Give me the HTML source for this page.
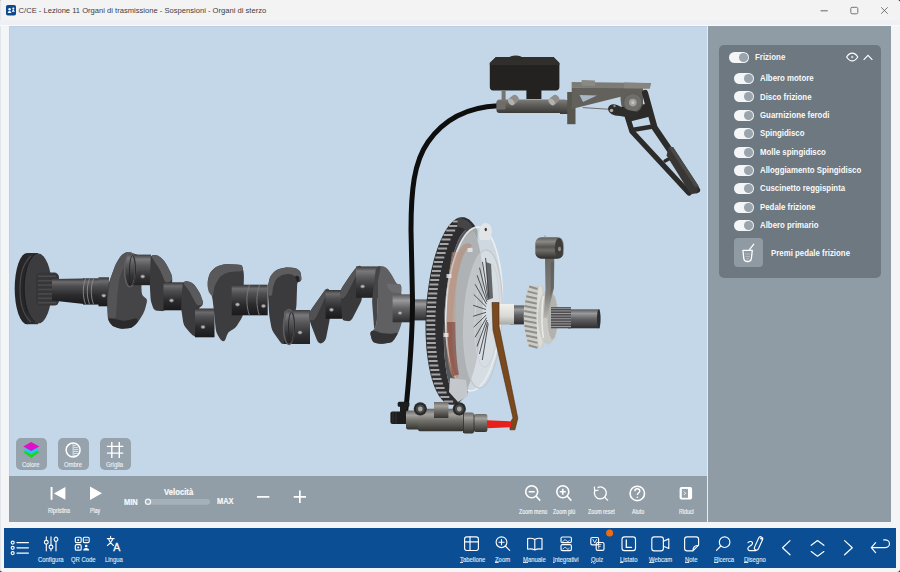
<!DOCTYPE html><html><head><meta charset="utf-8"><style>
*{box-sizing:border-box;margin:0;padding:0}
html,body{width:900px;height:572px;overflow:hidden;background:#202020;font-family:"Liberation Sans",sans-serif}
#win{position:absolute;left:0;top:0;width:900px;height:572px;background:#f4f5f7;border-radius:1.5px 3px 3px 3px;overflow:hidden}
.bx{position:absolute}
.tx{position:absolute;white-space:nowrap}
svg{position:absolute;left:0;top:0;overflow:visible}
u{text-decoration:underline;text-underline-offset:0.3px;text-decoration-thickness:0.6px}
</style></head><body><div id="win"><div class="bx" style="left:0px;top:0px;width:900px;height:20px;background:#f3f3f3;"></div>
<div class="bx" style="left:9px;top:26px;width:698px;height:450px;background:#c3d7e8;"></div>
<div class="bx" style="left:9px;top:26px;width:698px;height:1px;background:#b9cfe1;"></div>
<div class="bx" style="left:9px;top:26px;width:1px;height:450px;background:#bcd1e3;"></div>
<div class="bx" style="left:0px;top:0px;width:1px;height:572px;background:#e3e6ea;"></div>
<div class="bx" style="left:0px;top:20px;width:900px;height:5px;background:#eff0f3;"></div>
<div class="bx" style="left:0px;top:25px;width:900px;height:1px;background:#f8fafc;"></div>
<div class="bx" style="left:707px;top:26px;width:1px;height:496px;background:#e3edf3;"></div>
<div class="bx" style="left:9px;top:476px;width:698px;height:46px;background:#929ea7;"></div>
<div class="bx" style="left:708px;top:26px;width:183px;height:496px;background:#909ca5;"></div>
<div class="bx" style="left:719px;top:45px;width:162px;height:233px;background:#6d7880;border-radius:5px"></div>
<div class="bx" style="left:4px;top:528px;width:892px;height:40px;background:#0b4e93;"></div>
<svg width="900" height="20"><rect x="6" y="5" width="10" height="10.5" rx="1.8" fill="#0b4a92"/><circle cx="9.6" cy="9.2" r="1.2" fill="#fff"/><circle cx="13.3" cy="8.6" r="1.05" fill="#fff"/><path d="M7.7 12.9c0.2-1.3 0.9-2 1.9-2s1.7 0.7 1.9 2z M11.9 11.7c0.2-1 0.7-1.6 1.4-1.6s1.2 0.6 1.4 1.6z" fill="#fff"/><line x1="820.6" y1="10.8" x2="827.8" y2="10.8" stroke="#666" stroke-width="1"/><rect x="850.8" y="7.3" width="7" height="6.5" rx="1.3" fill="none" stroke="#666" stroke-width="0.9"/><path d="M881.2 7.3L887.7 13.7M887.7 7.3L881.2 13.7" stroke="#666" stroke-width="0.9"/></svg>
<div class="tx" style="left:18.60px;top:6.81px;font-size:7.6px;line-height:7.6px;font-weight:400;color:#404040;">C/CE - Lezione 11 Organi di trasmissione - Sospensioni - Organi di sterzo</div>
<svg width="900" height="572"><defs>
<clipPath id="vc"><rect x="9" y="26" width="698" height="450"/></clipPath>
<linearGradient id="gc" x1="0" y1="0" x2="0" y2="1"><stop offset="0" stop-color="#353436"/><stop offset="0.13" stop-color="#6c6b6e"/><stop offset="0.3" stop-color="#4e4d50"/><stop offset="0.65" stop-color="#2b2a2c"/><stop offset="1" stop-color="#1a191b"/></linearGradient>
<linearGradient id="gc2" x1="0" y1="0" x2="0" y2="1"><stop offset="0" stop-color="#3d3c3e"/><stop offset="0.15" stop-color="#7a797c"/><stop offset="0.35" stop-color="#5a595c"/><stop offset="0.7" stop-color="#333235"/><stop offset="1" stop-color="#222123"/></linearGradient>
<linearGradient id="gsh" x1="0" y1="0" x2="0" y2="1"><stop offset="0" stop-color="#3a393b"/><stop offset="0.25" stop-color="#646366"/><stop offset="0.5" stop-color="#3e3d40"/><stop offset="1" stop-color="#1e1d1f"/></linearGradient>
<linearGradient id="gsl" x1="0" y1="0" x2="0" y2="1"><stop offset="0" stop-color="#6a6965"/><stop offset="0.25" stop-color="#a2a19d"/><stop offset="0.5" stop-color="#75746f"/><stop offset="1" stop-color="#34332f"/></linearGradient>
<linearGradient id="gmc" x1="0" y1="0" x2="0" y2="1"><stop offset="0" stop-color="#7d7c78"/><stop offset="0.4" stop-color="#5f5e5a"/><stop offset="1" stop-color="#3a3936"/></linearGradient>
<linearGradient id="gsh2" x1="0" y1="0" x2="0" y2="1"><stop offset="0" stop-color="#5a5a5c"/><stop offset="0.22" stop-color="#9a9a9c"/><stop offset="0.5" stop-color="#636365"/><stop offset="1" stop-color="#2e2e30"/></linearGradient>
<linearGradient id="gsl2" x1="0" y1="0" x2="0" y2="1"><stop offset="0" stop-color="#f0f0ee"/><stop offset="0.6" stop-color="#d8d8d4"/><stop offset="1" stop-color="#a9a9a5"/></linearGradient>
<linearGradient id="glev" x1="0" y1="0" x2="0" y2="1"><stop offset="0" stop-color="#5e5d5a"/><stop offset="0.2" stop-color="#8a8985"/><stop offset="0.45" stop-color="#55544f"/><stop offset="0.6" stop-color="#6e6d69"/><stop offset="1" stop-color="#2e2d2b"/></linearGradient>
<linearGradient id="garm" x1="0" y1="0" x2="0" y2="1"><stop offset="0" stop-color="#6a6965"/><stop offset="0.6" stop-color="#7e7d79"/><stop offset="1" stop-color="#b5b4b0"/></linearGradient>
</defs><g clip-path="url(#vc)"><ellipse cx="27" cy="288.6" rx="12.3" ry="35.6" fill="#262527"/>
<rect x="27" y="253" width="11" height="71.2" fill="#2c2b2d"/>
<ellipse cx="38.2" cy="288.6" rx="13.6" ry="35" fill="#3c3b3d"/>
<path d="M31 256c-7 6-11 18-11 33s4 27 11 33" fill="none" stroke="#4a494b" stroke-width="1.2"/>
<path d="M35 254c-7 6-11 18-11 34s4 28 11 34" fill="none" stroke="#1e1d1f" stroke-width="1"/>
<rect x="36" y="272.6" width="23" height="33" rx="5" fill="#363537"/>
<rect x="38" y="275.5" width="18" height="1.6" fill="#4b4a4c"/>
<rect x="38" y="279.9" width="18" height="1.6" fill="#4b4a4c"/>
<rect x="38" y="284.3" width="18" height="1.6" fill="#4b4a4c"/>
<rect x="38" y="288.7" width="18" height="1.6" fill="#4b4a4c"/>
<rect x="38" y="293.1" width="18" height="1.6" fill="#4b4a4c"/>
<rect x="38" y="297.5" width="18" height="1.6" fill="#4b4a4c"/>
<rect x="38" y="301.9" width="18" height="1.6" fill="#4b4a4c"/>
<path d="M52 279L84 278.6L84 304L52 300.5Z" fill="url(#gc)"/>
<rect x="83" y="278.3" width="16" height="26.3" fill="url(#gc)"/>
<path d="M85.5 278.8c-1.5 4-2.2 8-2.2 12.5s0.7 9 2.2 13" fill="none" stroke="#8d8c8e" stroke-width="0.9"/>
<path d="M89.5 278.8c-1.5 4-2.2 8-2.2 12.5s0.7 9 2.2 13" fill="none" stroke="#8d8c8e" stroke-width="0.9"/>
<path d="M93.5 278.8c-1.5 4-2.2 8-2.2 12.5s0.7 9 2.2 13" fill="none" stroke="#8d8c8e" stroke-width="0.9"/>
<rect x="98.5" y="277.3" width="10.5" height="29" fill="url(#gc)"/>
<ellipse cx="103.8" cy="295.6" rx="2.1" ry="1.7" fill="#b3b3b3" stroke="#5a5a5a" stroke-width="0.6"/>
<path d="M129.2 252.4L129.2 252.4Q132.3 252.9 135.3 254.0L138.0 254.9Q141.0 256.0 141.5 259.2L142.5 266.8Q143.0 270.0 142.7 273.2L141.6 282.8Q141.3 286.0 141.5 289.2L141.7 292.5Q141.9 295.7 144.1 297.0L144.1 297.0Q146.3 298.3 146.8 299.6L146.8 299.6Q147.2 300.9 146.4 304.0L145.3 308.3Q144.5 311.4 142.9 314.2L140.0 319.1Q138.4 321.9 136.0 324.0L133.8 325.9Q131.4 328.0 128.2 328.2L124.2 328.6Q121.0 328.8 117.9 327.9L115.3 327.1Q112.2 326.2 110.4 323.6L109.7 322.7Q107.9 320.1 107.7 316.9L107.2 305.8Q107.0 302.6 107.2 299.4L107.7 288.4Q107.9 285.2 109.0 282.2L109.4 281.2Q110.5 278.2 111.6 275.2L114.6 267.2Q115.7 264.2 117.4 261.5L119.3 258.2Q121.0 255.5 123.6 253.8L123.6 253.8Q126.2 252.0 129.2 252.4Z" fill="#454446" />
<path d="M109.1 320.8L110.6 323.4Q112.2 326.2 115.3 327.1L117.9 327.9Q121.0 328.8 124.2 328.6L128.2 328.2Q131.4 328.0 133.8 325.9L136.0 324.0Q138.4 321.9 137.7 319.9L137.7 319.9Q137.0 318.0 133.9 318.8L128.1 320.2Q125.0 321.0 121.9 320.4L117.1 319.6Q114.0 319.0 110.8 318.5L110.7 318.5Q107.5 318.0 109.1 320.8Z" fill="#2a292b" />
<path d="M111.4 275.9L114.8 266.5Q115.7 264.2 117.0 262.1L119.7 257.6Q121.0 255.5 123.1 254.1L124.1 253.4Q126.2 252.0 128.7 252.4L129.8 252.5Q132.3 252.9 134.2 253.9L134.2 253.9Q136.0 255.0 133.8 256.1L132.2 256.9Q130.0 258.0 128.5 260.0L125.5 264.0Q124.0 266.0 123.2 268.4L119.8 277.6Q119.0 280.0 118.8 282.5L117.2 297.5Q117.0 300.0 116.9 302.5L116.1 315.5Q116.0 318.0 113.5 318.0L110.5 318.0Q108.0 318.0 107.9 315.5L107.6 302.5Q107.5 300.0 107.8 297.5L110.2 280.7Q110.5 278.2 111.4 275.9Z" fill="#545356" />
<rect x="130" y="254.6" width="21" height="30.6" fill="url(#gc2)"/>
<ellipse cx="130" cy="269.8" rx="5.5" ry="17" fill="url(#gc2)" stroke="#5e5d60" stroke-width="1.6"/><ellipse cx="132.5" cy="270" rx="3" ry="14.5" fill="none" stroke="#2a292b" stroke-width="1"/>
<ellipse cx="142.7" cy="276.5" rx="2.1" ry="1.7" fill="#b3b3b3" stroke="#5a5a5a" stroke-width="0.6"/>
<path d="M153.3 255.1L153.3 255.0Q155.9 254.6 158.5 255.9L158.5 255.9Q161.1 257.2 163.0 259.8L164.5 261.6Q166.4 264.2 167.8 267.1L170.2 271.8Q171.6 274.7 172.1 277.4L172.1 277.4Q172.5 280.0 172.0 283.2L168.5 302.8Q168.0 306.0 166.3 308.7L166.3 308.7Q164.6 311.4 161.4 311.1L157.3 310.8Q154.1 310.5 153.0 307.5L151.8 303.9Q150.7 300.9 150.5 297.7L150.0 288.4Q149.8 285.2 149.9 282.0L150.6 258.7Q150.7 255.5 153.3 255.1Z" fill="#3a393b" />
<path d="M153.3 255.1L153.3 255.0Q155.9 254.6 158.5 255.9L158.5 255.9Q161.1 257.2 163.0 259.8L164.5 261.6Q166.4 264.2 167.8 267.1L170.2 271.8Q171.6 274.7 172.1 277.4L172.1 277.4Q172.5 280.0 169.8 281.7L168.7 282.3Q166.0 284.0 164.7 281.1L161.3 272.9Q160.0 270.0 158.3 267.3L152.4 258.2Q150.7 255.5 153.3 255.1Z" fill="#5b5a5d" />
<rect x="163.5" y="282.3" width="20.5" height="28" fill="url(#gc)"/>
<ellipse cx="171.5" cy="300.5" rx="2.1" ry="1.7" fill="#b3b3b3" stroke="#5a5a5a" stroke-width="0.6"/>
<path d="M184.8 281.5L184.8 281.5Q187.0 280.6 189.9 282.0L191.1 282.6Q194.0 284.0 195.7 286.7L198.5 291.0Q200.2 293.7 201.2 296.7L202.7 301.2Q203.7 304.2 201.3 306.3L200.0 307.3Q197.6 309.4 197.6 312.6L197.6 334.1Q197.6 337.3 194.9 336.5L194.9 336.5Q192.3 335.6 190.3 333.1L185.6 327.5Q183.6 325.0 183.1 321.8L181.5 310.8Q181.0 307.6 181.2 304.4L182.5 285.5Q182.7 282.3 184.8 281.5Z" fill="#3b3a3c" />
<path d="M184.8 281.5L184.8 281.5Q187.0 280.6 189.9 282.0L191.1 282.6Q194.0 284.0 195.7 286.7L198.5 291.0Q200.2 293.7 201.2 296.7L202.7 301.2Q203.7 304.2 200.6 305.0L200.1 305.2Q197.0 306.0 195.6 303.1L191.4 294.9Q190.0 292.0 188.1 289.4L184.6 284.9Q182.7 282.3 184.8 281.5Z" fill="#5a595c" />
<rect x="195" y="308.5" width="19.5" height="28.8" fill="url(#gc)"/>
<ellipse cx="203.0" cy="327.0" rx="2.1" ry="1.7" fill="#b3b3b3" stroke="#5a5a5a" stroke-width="0.6"/>
<path d="M212.1 270.4L213.6 268.9Q215.9 266.6 219.0 265.7L221.5 264.9Q224.6 264.0 227.8 264.2L236.8 264.6Q240.0 264.8 241.1 265.1L241.1 265.1Q242.2 265.5 242.8 268.6L243.4 271.1Q244.0 274.2 243.9 277.4L243.1 312.8Q243.0 316.0 241.3 318.7L236.9 325.7Q235.2 328.4 232.3 329.8L231.0 330.6Q228.1 332.0 227.0 335.0L225.7 338.7Q224.6 341.7 222.8 341.2L222.8 341.2Q221.1 340.8 219.5 338.0L217.6 334.8Q216.0 332.0 215.7 328.8L214.4 316.1Q214.1 312.9 213.8 309.7L212.7 300.4Q212.4 297.2 211.3 294.2L208.3 285.3Q207.2 282.3 208.0 279.2L209.0 275.8Q209.8 272.7 212.1 270.4Z" fill="#3d3c3e" />
<path d="M207.8 281.6L209.2 275.1Q209.8 272.7 211.6 270.9L214.1 268.4Q215.9 266.6 218.3 265.9L222.2 264.7Q224.6 264.0 227.1 264.1L237.5 264.7Q240.0 264.8 241.1 265.1L241.1 265.1Q242.2 265.5 242.8 267.9L242.9 268.6Q243.5 271.0 241.0 271.2L240.5 271.3Q238.0 271.5 235.5 271.6L230.5 271.9Q228.0 272.0 225.8 273.2L222.2 275.3Q220.0 276.5 218.7 278.7L215.8 283.8Q214.5 286.0 214.1 288.5L213.2 294.5Q212.8 297.0 211.2 295.1L210.1 293.9Q208.5 292.0 208.1 289.5L207.6 286.5Q207.2 284.0 207.8 281.6Z" fill="#59585b" />
<rect x="231.7" y="284.7" width="36" height="30.6" fill="url(#gc)"/>
<path d="M249.5 285c-1.8 5-2.6 10-2.6 15.3s0.8 10.3 2.6 15.3" fill="none" stroke="#77767a" stroke-width="1"/>
<path d="M259.5 285c-1.8 5-2.6 10-2.6 15.3s0.8 10.3 2.6 15.3" fill="none" stroke="#77767a" stroke-width="1"/>
<ellipse cx="237.5" cy="304.5" rx="2.1" ry="1.7" fill="#b3b3b3" stroke="#5a5a5a" stroke-width="0.6"/>
<ellipse cx="263.5" cy="306.0" rx="2.1" ry="1.7" fill="#b3b3b3" stroke="#5a5a5a" stroke-width="0.6"/>
<path d="M272.4 273.7L274.1 272.1Q276.3 269.8 279.4 269.0L282.8 268.0Q285.9 267.2 289.1 267.5L293.2 267.8Q296.4 268.1 298.5 269.9L298.5 269.9Q300.7 271.6 301.0 274.8L301.3 278.0Q301.6 281.2 299.4 281.6L299.4 281.6Q297.2 282.0 297.1 285.2L296.5 304.2Q296.4 307.4 295.6 310.5L288.4 339.2Q287.6 342.3 285.0 343.6L285.0 343.6Q282.4 345.0 280.6 342.4L273.7 332.7Q271.9 330.1 271.3 327.0L269.9 319.2Q269.3 316.1 269.1 312.9L267.8 290.5Q267.6 287.3 268.3 284.2L269.5 279.1Q270.2 276.0 272.4 273.7Z" fill="#3b3a3c" />
<path d="M268.2 284.9L269.6 278.4Q270.2 276.0 272.0 274.2L274.5 271.6Q276.3 269.8 278.7 269.1L283.5 267.9Q285.9 267.2 288.4 267.4L293.9 267.9Q296.4 268.1 298.3 269.7L298.8 270.0Q300.7 271.6 300.9 274.1L301.4 278.7Q301.6 281.2 299.6 281.6L299.6 281.6Q297.5 282.0 296.8 279.6L296.7 278.9Q296.0 276.5 293.7 275.5L292.3 274.8Q290.0 273.8 287.5 274.1L284.5 274.5Q282.0 274.8 280.0 276.2L278.0 277.6Q276.0 279.0 275.1 281.3L273.9 284.7Q273.0 287.0 272.7 289.5L272.3 293.5Q272.0 296.0 270.0 296.0L270.0 296.0Q268.0 296.0 267.9 293.5L267.7 289.8Q267.6 287.3 268.2 284.9Z" fill="#5c5b5e" />
<path d="M295 277c1.3-1.6 3.2-1.6 4.2 0.4l0.4 4.2l-2.4 0.5z" fill="#242325"/>
<rect x="284" y="310" width="26" height="34" fill="url(#gc2)"/>
<ellipse cx="289" cy="327" rx="5.5" ry="17.5" fill="url(#gc2)" stroke="#5e5d60" stroke-width="1.6"/><ellipse cx="291.5" cy="327" rx="3" ry="15" fill="none" stroke="#2a292b" stroke-width="1"/>
<ellipse cx="300.0" cy="332.5" rx="2.1" ry="1.7" fill="#b3b3b3" stroke="#5a5a5a" stroke-width="0.6"/>
<path d="M310.9 310.0L324.5 290.8Q326.4 288.2 328.2 289.1L328.2 289.1Q330.0 290.0 330.0 293.2L330.0 314.8Q330.0 318.0 329.4 321.1L326.2 337.5Q325.6 340.6 323.4 342.3L323.4 342.3Q321.2 344.0 319.4 343.1L319.4 343.1Q317.7 342.3 316.6 339.3L310.9 324.4Q309.8 321.4 309.5 318.2L309.3 315.8Q309.0 312.6 310.9 310.0Z" fill="#39383a" />
<path d="M310.9 310.0L324.5 290.8Q326.4 288.2 328.2 289.1L328.2 289.1Q330.0 290.0 328.4 292.7L325.6 297.3Q324.0 300.0 322.7 302.9L316.3 317.1Q315.0 320.0 312.5 320.5L312.5 320.5Q310.0 321.0 309.6 317.8L309.4 315.8Q309.0 312.6 310.9 310.0Z" fill="#515053" />
<rect x="325.6" y="290" width="16.6" height="28.8" fill="url(#gc)"/>
<ellipse cx="331.5" cy="309.8" rx="2.1" ry="1.7" fill="#b3b3b3" stroke="#5a5a5a" stroke-width="0.6"/>
<path d="M342.2 287.3L349.1 276.9Q350.9 274.2 352.9 271.7L355.0 268.9Q357.0 266.4 359.2 265.9L359.2 265.9Q361.4 265.5 361.5 268.7L361.9 296.8Q362.0 300.0 360.5 302.8L352.4 318.6Q350.9 321.4 347.7 321.1L345.4 320.8Q342.2 320.5 342.0 317.3L340.6 293.2Q340.4 290.0 342.2 287.3Z" fill="#39383a" />
<path d="M342.2 287.3L349.1 276.9Q350.9 274.2 352.9 271.7L355.0 268.9Q357.0 266.4 359.2 265.9L359.2 265.9Q361.4 265.5 359.9 268.3L357.5 273.2Q356.0 276.0 354.6 278.9L347.4 293.1Q346.0 296.0 343.5 298.0L343.5 298.0Q341.0 300.0 340.8 296.8L340.6 293.2Q340.4 290.0 342.2 287.3Z" fill="#545356" />
<rect x="356" y="266.4" width="23.5" height="31.4" fill="url(#gc2)"/>
<ellipse cx="362.6" cy="286.4" rx="2.1" ry="1.7" fill="#b3b3b3" stroke="#5a5a5a" stroke-width="0.6"/>
<path d="M383.8 266.4L383.8 266.4Q386.4 267.2 388.2 269.8L390.8 273.4Q392.6 276.0 394.0 278.9L395.5 281.8Q396.9 284.7 399.1 284.2L399.1 284.2Q401.3 283.8 401.3 287.0L401.3 290.2Q401.3 293.4 401.4 296.6L402.1 318.2Q402.2 321.4 401.2 324.4L399.7 328.9Q398.7 331.9 397.1 334.7L394.2 339.5Q392.6 342.3 389.4 342.8L384.4 343.5Q381.2 344.0 378.1 343.4L375.6 342.9Q372.5 342.3 371.7 339.2L370.6 335.0Q369.8 331.9 372.0 331.0L372.0 331.0Q374.2 330.1 375.3 327.1L375.7 326.1Q376.8 323.1 376.9 319.9L377.6 301.9Q377.7 298.7 377.5 295.5L376.2 270.4Q376.0 267.2 378.6 266.4L378.6 266.4Q381.2 265.5 383.8 266.4Z" fill="#605f62" />
<path d="M372.0 331.0L372.0 331.0Q374.2 330.1 377.1 331.5L377.1 331.6Q380.0 333.0 383.2 333.3L389.4 333.7Q392.6 334.0 395.6 333.0L395.7 332.9Q398.7 331.9 397.1 334.7L394.2 339.5Q392.6 342.3 389.4 342.8L384.4 343.5Q381.2 344.0 378.1 343.4L375.6 342.9Q372.5 342.3 371.7 339.2L370.6 335.0Q369.8 331.9 372.0 331.0Z" fill="#343335" />
<path d="M378.6 266.4L378.6 266.4Q381.2 265.5 380.5 268.6L378.7 276.9Q378.0 280.0 377.9 283.2L377.8 295.5Q377.7 298.7 377.6 301.9L376.9 319.9Q376.8 323.1 375.7 326.1L375.3 327.1Q374.2 330.1 374.0 326.9L372.2 303.2Q372.0 300.0 372.4 296.8L375.6 270.4Q376.0 267.2 378.6 266.4Z" fill="#454446" />
<path d="M389.2 283.5L393.7 284.2Q396.9 284.7 399.1 284.2L399.1 284.2Q401.3 283.8 401.3 287.0L401.3 290.2Q401.3 293.4 398.1 293.0L393.2 292.4Q390.0 292.0 388.7 289.1L387.3 285.9Q386.0 283.0 389.2 283.5Z" fill="#6c6b6e" />
<rect x="392.6" y="294.3" width="21" height="28" fill="url(#gsh2)"/>
<rect x="412" y="299.4" width="18" height="21" fill="url(#gsh2)"/>
<ellipse cx="400.0" cy="313.0" rx="2.1" ry="1.7" fill="#b3b3b3" stroke="#5a5a5a" stroke-width="0.6"/>
<path d="M498 105.8C470 107 445 118 428 142C414 162 411 190 411 230L412.5 300C412.5 345 409 380 405 418" fill="none" stroke="#0e0e0e" stroke-width="5"/>
<path d="M467.4 393.2 L466.3 394.7 L465.3 396.2 L464.2 397.5 L463.1 398.7 L462.0 399.8 L460.9 400.8 L459.9 401.7 L458.8 402.5 L457.7 403.2 L456.6 403.7 L455.5 404.2 L454.4 404.5 L453.3 404.7 L452.2 404.8 L451.1 404.8 L450.0 404.7 L449.0 404.5 L447.9 404.1 L446.8 403.6 L445.8 403.1 L444.8 402.4 L443.8 401.6 L442.8 400.6 L441.8 399.6 L440.9 398.5 L439.9 397.3 L439.0 395.9 L438.1 394.5 L437.3 392.9 L436.4 391.3 L435.6 389.5 L434.8 387.7 L434.0 385.8 L433.3 383.7 L432.6 381.6 L431.9 379.4 L431.3 377.1 L430.6 374.8 L430.1 372.3 L429.5 369.8 L429.0 367.2 L428.5 364.6 L428.1 361.8 L427.6 359.1 L427.3 356.2 L426.9 353.3 L426.6 350.4 L426.3 347.4 L426.1 344.3 L425.9 341.3 L425.8 338.1 L425.6 335.0 L425.6 331.8 L425.5 328.6 L425.5 325.4 L425.5 322.1 L425.6 318.9 L425.7 315.6 L425.9 312.3 L426.1 309.1 L426.3 305.8 L426.5 302.5 L426.8 299.3 L427.2 296.0 L427.6 292.8 L428.0 289.6 L428.4 286.4 L428.9 283.3 L429.4 280.2 L429.9 277.1 L430.5 274.1 L431.1 271.1 L431.8 268.1 L432.5 265.2 L433.2 262.4 L433.9 259.6 L434.7 256.9 L435.4 254.3 L436.3 251.7 L437.1 249.2 L438.0 246.8 L438.8 244.4 L439.8 242.2 L440.7 240.0 L441.6 237.9 L442.6 235.9 L443.6 234.0 L444.6 232.1 L445.6 230.4 L446.6 228.8 L447.7 227.3 L448.7 225.8 L449.8 224.5 L450.9 223.3 L452.0 222.2 L453.1 221.2 L454.1 220.3 L455.2 219.5 L456.3 218.8 L457.4 218.3 L458.5 217.8 L459.6 217.5 L460.7 217.3 L461.8 217.2 L462.9 217.2 L464.0 217.3 L465.0 217.5 L466.1 217.9 L467.2 218.4 L468.2 218.9 L469.2 219.6 L470.2 220.4 L471.2 221.4 L472.2 222.4 L473.1 223.5 L474.1 224.7 L475.0 226.1 L475.9 227.5 L476.7 229.1 L477.6 230.7 L477.5 241.0 L477.1 239.5 L476.6 238.2 L476.0 236.9 L475.5 235.7 L474.9 234.6 L474.4 233.6 L473.8 232.7 L473.2 231.9 L472.6 231.2 L472.0 230.6 L471.4 230.1 L470.7 229.7 L470.1 229.5 L469.4 229.3 L468.8 229.2 L468.1 229.2 L467.4 229.3 L466.8 229.5 L466.1 229.8 L465.4 230.2 L464.7 230.7 L464.0 231.4 L463.3 232.1 L462.7 232.9 L462.0 233.8 L461.3 234.8 L460.6 235.9 L459.9 237.1 L459.3 238.4 L458.6 239.8 L457.9 241.3 L457.3 242.8 L456.6 244.5 L456.0 246.2 L455.4 248.0 L454.7 249.9 L454.1 251.9 L453.5 253.9 L452.9 256.0 L452.4 258.2 L451.8 260.4 L451.3 262.8 L450.7 265.1 L450.2 267.6 L449.7 270.0 L449.2 272.6 L448.8 275.2 L448.3 277.8 L447.9 280.5 L447.5 283.2 L447.1 286.0 L446.7 288.7 L446.4 291.6 L446.0 294.4 L445.7 297.3 L445.5 300.2 L445.2 303.1 L445.0 306.0 L444.7 308.9 L444.5 311.8 L444.4 314.7 L444.2 317.7 L444.1 320.6 L444.0 323.5 L443.9 326.4 L443.9 329.3 L443.8 332.1 L443.8 335.0 L443.8 337.8 L443.9 340.6 L443.9 343.3 L444.0 346.0 L444.1 348.7 L444.3 351.3 L444.4 353.9 L444.6 356.4 L444.8 358.9 L445.1 361.3 L445.3 363.7 L445.6 366.0 L445.9 368.2 L446.2 370.4 L446.5 372.5 L446.9 374.5 L447.3 376.5 L447.7 378.3 L448.1 380.1 L448.5 381.8 L449.0 383.5 L449.5 385.0 L449.9 386.5 L450.4 387.8 L451.0 389.1 L451.5 390.3 L452.1 391.4 L452.6 392.4 L453.2 393.3 L453.8 394.1 L454.4 394.8 L455.0 395.4 L455.6 395.9 L456.3 396.3 L456.9 396.5 L457.6 396.7 L458.2 396.8 L458.9 396.8 L459.6 396.7 L460.2 396.5 L460.9 396.2 L461.6 395.8 L462.3 395.3 L463.0 394.6 L463.7 393.9 L464.3 393.1 L465.0 392.2 L465.7 391.2 L466.4 390.1 L467.1 388.9 L467.7 387.6 L468.4 386.2Z" fill="#2e2d2f" />
<g transform="rotate(3.6 463.5 313)"><ellipse cx="463.5" cy="313" rx="19" ry="84" fill="#58575a"/></g>
<path d="M453.0 221.5h9.0M449.0 226.0h9.0M446.2 230.5h9.0M443.6 235.0h9.0M441.5 239.5h9.0M439.6 244.0h9.0M438.1 248.5h9.0M436.6 253.0h9.0M435.3 257.5h9.0M434.0 262.0h9.0M432.9 266.5h9.0M431.9 271.0h9.0M431.0 275.5h9.0M430.2 280.0h9.0M429.4 284.5h9.0M428.8 289.0h9.0M428.3 293.5h9.0M427.7 298.0h9.0M427.3 302.5h9.0M427.0 307.0h9.0M426.7 311.5h9.0M426.5 316.0h9.0M426.4 320.5h9.0M426.3 325.0h9.0M426.3 329.5h9.0M426.4 334.0h9.0M426.6 338.5h9.0M426.8 343.0h9.0M427.1 347.5h9.0M427.6 352.0h9.0M428.1 356.5h9.0M428.6 361.0h9.0M429.4 365.5h9.0M430.3 370.0h9.0M431.3 374.5h9.0M432.5 379.0h9.0M433.9 383.5h9.0M435.6 388.0h9.0M437.6 392.5h9.0M440.3 397.0h9.0M444.1 401.5h9.0" stroke="#a5a5a7" stroke-width="1.8" fill="none"/>
<path d="M458 218C466 218 472 223 474 231L468 234C466 229 462 227 457 227Z" fill="#454447"/>
<g transform="rotate(3 474 310)"><ellipse cx="474" cy="309" rx="28" ry="82" fill="#d3d8dc" opacity="0.7"/></g>
<g transform="rotate(3 474 310)"><ellipse cx="474" cy="309" rx="28" ry="82" fill="none" stroke="#eef1f3" stroke-width="1.6" opacity="0.9"/></g>
<g transform="rotate(4 462 312)" fill="none"><ellipse cx="463" cy="312" rx="13" ry="66" stroke="#b58a74" stroke-width="6" opacity="0.6" stroke-dasharray="0 70 140 400"/></g>
<path d="M447 322C447.5 345 449.5 362 453 376L459 374.5C456.5 362 455.5 345 455.3 322Z" fill="#7a3526" opacity="0.6"/>
<path d="M452 252C448 275 446.5 300 447 322L455.3 322C455.5 300 456.5 276 460 252Z" fill="#c09a86" opacity="0.5"/>
<g transform="rotate(3 483 318)"><ellipse cx="483" cy="319" rx="19" ry="69" fill="#e4e7ea" opacity="0.35"/><ellipse cx="483" cy="319" rx="19" ry="69" fill="none" stroke="#c2c7cc" stroke-width="1.2"/><ellipse cx="487" cy="315" rx="12" ry="52" fill="none" stroke="#cfd3d7" stroke-width="1"/></g>
<path d="M479 236C479 227 482 223 485.5 223C489 223 492 226 492 232L490 240L480 240Z" fill="#e1e5e8"/>
<ellipse cx="485.8" cy="229.5" rx="1.2" ry="1.8" fill="#3a3a3a"/>
<path d="M489.0 297.5L485.6 257.9M488.2 298.5L482.4 261.8M487.5 300.0L479.5 267.7M487.0 301.9L477.1 275.3M486.5 304.2L475.1 284.3M486.2 306.8L473.8 294.5M486.0 309.5L473.1 305.3M486.0 312.3L473.1 316.3M486.2 315.1L473.7 327.1M486.5 317.7L475.1 337.2M486.9 320.0L477.0 346.4M487.5 322.0L479.4 354.0M488.2 323.5L482.3 360.0" stroke="#3a3a3c" stroke-width="1" fill="none" opacity="0.85"/>
<path d="M486 262L491 264L493 298L488 300Z" fill="#3d3d3f" opacity="0.75"/>
<rect x="446.5" y="274" width="5" height="4" fill="#e8eaec" opacity="0.8"/>
<rect x="443.5" y="333" width="5" height="4" fill="#e8eaec" opacity="0.8"/>
<rect x="455.5" y="388" width="5" height="4" fill="#e8eaec" opacity="0.8"/>
<rect x="467.5" y="248" width="5" height="4" fill="#e8eaec" opacity="0.8"/>
<path d="M450 378L466 380L468 396L458 402L449 392Z" fill="#c4c8cc"/>
<rect x="510" y="305.4" width="16" height="19" fill="url(#gsh2)"/>
<rect x="568" y="309.3" width="31.6" height="19" fill="url(#gsh2)"/>
<ellipse cx="598.8" cy="318.8" rx="1.8" ry="9.5" fill="#2e2e30"/>
<rect x="497" y="304" width="17" height="20.5" fill="url(#gsl2)"/>
<path d="M529 285.7C525 296 523.7 306 523.7 316.5C523.7 327 525 337 529 347.3L543.5 347.3L543.5 285.7Z" fill="#cdcdc9"/>
<path d="M529.2 286.5L537.5 289.0M527.6 291.4L537.5 293.9M526.3 296.3L537.5 298.8M525.3 301.2L537.5 303.7M524.6 306.1L537.5 308.6M524.2 311.0L537.5 313.5M524.0 315.9L537.5 318.4M524.1 320.8L537.5 323.3M524.5 325.7L537.5 328.2M525.1 330.6L537.5 333.1M526.1 335.5L537.5 338.0M527.3 340.4L537.5 342.9M528.7 345.3L537.5 347.8" stroke="#8e8e8a" stroke-width="2" fill="none"/>
<ellipse cx="540.3" cy="316.5" rx="3.8" ry="30.8" fill="#dcdcd8"/>
<ellipse cx="548" cy="317" rx="10" ry="27.5" fill="#c9c9c5"/>
<ellipse cx="552.5" cy="317" rx="5.5" ry="23" fill="#b2b2ae" stroke="#d6d6d2" stroke-width="1.2" stroke-dasharray="1 1.2"/>
<path d="M543.5 296C541.5 306 541.5 328 543.5 338" stroke="#e8e8e4" stroke-width="1.6" fill="none"/>
<rect x="551" y="307" width="20" height="21.3" fill="#4e4e50"/>
<path d="M551 308.3h20M551 310.9h20M551 313.5h20M551 316.1h20M551 318.7h20M551 321.3h20M551 323.9h20M551 326.5h20" stroke="#9a9a9c" stroke-width="1" fill="none"/>
<path d="M545 258L554.3 258L554 288L551 300L547 318L543.5 318L545.5 290Z" fill="url(#garm)"/>
<path d="M551 262L554 262L553.5 288L550.5 296Z" fill="#5a5955" opacity="0.6"/>
<rect x="535.3" y="237.3" width="28.2" height="21.4" rx="6" fill="url(#glev)"/>
<ellipse cx="559" cy="248" rx="4.2" ry="10" fill="#3e3d3a"/>
<ellipse cx="559.5" cy="249" rx="1.5" ry="2.2" fill="#8a8985"/>
<path d="M545 238v-2.5" stroke="#8a8a88" stroke-width="1"/>
<path d="M492 302.5L499 302.5L499 326L517.8 418.2L514.9 429.8L510 429.8L510 423L513 418L493 330Z" fill="#7a4a1e" stroke="#4a2a10" stroke-width="0.6"/>
<rect x="397.7" y="401.8" width="11.7" height="4.9" rx="1.5" fill="#1c1c1c"/>
<rect x="400" y="406" width="7" height="18" fill="#1c1c1c"/>
<rect x="390.4" y="411.6" width="14" height="12.3" rx="2" fill="#1c1c1c"/>
<path d="M393 412v11.5M396 412v11.5" stroke="#3a3a3a" stroke-width="0.8"/>
<rect x="406" y="410.5" width="14" height="19" rx="2" fill="url(#gsl)"/>
<rect x="418" y="408.8" width="46" height="22.4" rx="2" fill="url(#gsl)"/>
<rect x="463" y="412.4" width="11" height="21" rx="2" fill="url(#gsl)"/>
<rect x="474" y="414" width="13.4" height="18" rx="2" fill="url(#gsl)"/>
<path d="M463.5 413v20M474 414.5v17" stroke="#2e2d2b" stroke-width="0.8"/>
<rect x="434" y="402" width="14.4" height="16" fill="url(#gsl)"/>
<circle cx="420.3" cy="408.8" r="6.6" fill="#2a2a2a"/><circle cx="420.3" cy="408.8" r="4.4" fill="#474746"/><circle cx="420.3" cy="409" r="2.4" fill="#a8a8a5"/>
<circle cx="459.3" cy="408.8" r="6.6" fill="#2a2a2a"/><circle cx="459.3" cy="408.8" r="4.4" fill="#474746"/><circle cx="459.3" cy="409" r="2.4" fill="#a8a8a5"/>
<path d="M487 420.2L511 421.4L511 427.2L487 428.2Z" fill="#e8201c"/>
<rect x="496.5" y="99.5" width="71" height="13.5" rx="3" fill="url(#gmc)"/>
<rect x="526.4" y="90" width="15" height="9" fill="#222120"/>
<g transform="rotate(-40 513.4 100)"><rect x="508" y="96" width="11" height="8" rx="4" fill="#8f8e8a"/><ellipse cx="510.5" cy="100" rx="2.5" ry="3.8" fill="#b3b2ae"/></g><g transform="rotate(-40 554 100)"><rect x="548.6" y="96" width="11" height="8" rx="4" fill="#8f8e8a"/><ellipse cx="551" cy="100" rx="2.5" ry="3.8" fill="#b3b2ae"/></g>
<path d="M496 57L553.5 57L559.4 63L559.4 87C559.4 89 558 90.5 556 90.5L493 90.5C491 90.5 489.8 89 489.8 87L489.8 63Z" fill="#232220"/>
<path d="M496 57L553.5 57L559.4 63L559.4 65L489.8 65L489.8 63Z" fill="#302f2c"/>
<ellipse cx="515.7" cy="58" rx="6.6" ry="2.6" fill="#2e2d2b"/>
<rect x="501.6" y="90.6" width="4" height="11" fill="#75746f"/><rect x="496.6" y="101" width="9" height="8.5" rx="1.5" fill="#6e6d69"/>
<rect x="560" y="100" width="13" height="14" fill="url(#gmc)"/>
<path d="M567.2 92L575.5 92L575.5 124.2L567.2 124.2Z" fill="#57564f"/>
<path d="M571.7 87.6L643 88L643 98L621.7 96.4L571.7 109Z" fill="#62615c"/>
<path d="M620.5 88L643 88L643 104C643 109 639 112 633 112L624 112C621 108 620.5 100 620.5 96Z" fill="#605f5a"/>
<path d="M571.7 82L651 83.1L649.8 88.6L571.7 87.8Z" fill="#7c7b76"/>
<path d="M581.7 80L595 80.4L595 86L581.7 85.7Z" fill="#8a8984"/><path d="M624 82.5L650.5 83.2L649.8 88.6L624 88.2Z" fill="#86857f"/>
<path d="M579.5 95L597 95.5L583 102Z" fill="#a9b8c4"/>
<path d="M582.8 107.6L608.3 109.2" stroke="#6e6d69" stroke-width="1"/>
<g fill="none" stroke="#2c2b29" stroke-linecap="round" stroke-linejoin="round"><path d="M645 93L654.5 127.5L697 190" stroke-width="6.2"/><path d="M627.5 117L632 131.5L689 193" stroke-width="5.4"/><path d="M632 130L653 126.5" stroke-width="4.4"/><path d="M622 108L646 105L648 116L628 121Z" stroke-width="2" fill="#2c2b29"/><path d="M665 161L670.5 158" stroke-width="3.4"/></g>
<path d="M668.7 147.1L673 147.1L698.5 186L697 193.3L690.7 194.3L666.6 155.5Z" fill="#383735"/>
<path d="M668.7 147.1L673 147.1L698.5 186L695 187Z" fill="#4a4946"/>
<circle cx="632.8" cy="102.6" r="10" fill="#5d5c58"/><circle cx="632.8" cy="102.6" r="8.6" fill="#6f6e6a"/><circle cx="632.8" cy="102.6" r="3.8" fill="#a3a29e"/><circle cx="632.8" cy="102.6" r="1.5" fill="#c8c7c3"/>
<path d="M608 108.5C609 104.5 613 103.5 617 105L628 110L638 112L637 119L620 116C613 116 608 113 608 108.5Z" fill="#2e2d2b"/>
<circle cx="611.5" cy="110.5" r="1.8" fill="#a9a8a4"/><circle cx="614.5" cy="106" r="1.2" fill="#8a8985"/></g></svg>
<div class="bx" style="left:729px;top:52.4px;width:20.2px;height:11px;border-radius:5.5px;background:#f4f5f6"></div><div class="bx" style="left:738.9px;top:53.4px;width:9.3px;height:9px;border-radius:50%;background:#9aa4ad"></div>
<div class="tx" style="left:755.20px;top:53.47px;font-size:8.8px;line-height:8.8px;font-weight:700;color:#f4f6f7;transform:scaleX(0.9);transform-origin:0 0;">Frizione</div>
<svg width="900" height="572"><path d="M846.6 57c1.6-2.6 3.6-3.9 5.6-3.9s4 1.3 5.6 3.9c-1.6 2.6-3.6 3.9-5.6 3.9s-4-1.3-5.6-3.9z" fill="none" stroke="#fff" stroke-width="1.1"/><circle cx="852.2" cy="57" r="1.2" fill="#ccd"/><path d="M863.6 59.8L868 55.4L872.4 59.8" fill="none" stroke="#fff" stroke-width="1.2"/></svg>
<div class="bx" style="left:734px;top:73.1px;width:20.2px;height:11px;border-radius:5.5px;background:#f4f5f6"></div><div class="bx" style="left:743.9px;top:74.1px;width:9.3px;height:9px;border-radius:50%;background:#9aa4ad"></div>
<div class="tx" style="left:760.30px;top:74.27px;font-size:8.8px;line-height:8.8px;font-weight:700;color:#f9fafb;transform:scaleX(0.893);transform-origin:0 0;">Albero motore</div>
<div class="bx" style="left:734px;top:91.44999999999999px;width:20.2px;height:11px;border-radius:5.5px;background:#f4f5f6"></div><div class="bx" style="left:743.9px;top:92.44999999999999px;width:9.3px;height:9px;border-radius:50%;background:#9aa4ad"></div>
<div class="tx" style="left:760.30px;top:92.62px;font-size:8.8px;line-height:8.8px;font-weight:700;color:#f9fafb;transform:scaleX(0.893);transform-origin:0 0;">Disco frizione</div>
<div class="bx" style="left:734px;top:109.8px;width:20.2px;height:11px;border-radius:5.5px;background:#f4f5f6"></div><div class="bx" style="left:743.9px;top:110.8px;width:9.3px;height:9px;border-radius:50%;background:#9aa4ad"></div>
<div class="tx" style="left:760.30px;top:110.97px;font-size:8.8px;line-height:8.8px;font-weight:700;color:#f9fafb;transform:scaleX(0.893);transform-origin:0 0;">Guarnizione ferodi</div>
<div class="bx" style="left:734px;top:128.15px;width:20.2px;height:11px;border-radius:5.5px;background:#f4f5f6"></div><div class="bx" style="left:743.9px;top:129.15px;width:9.3px;height:9px;border-radius:50%;background:#9aa4ad"></div>
<div class="tx" style="left:760.30px;top:129.32px;font-size:8.8px;line-height:8.8px;font-weight:700;color:#f9fafb;transform:scaleX(0.893);transform-origin:0 0;">Spingidisco</div>
<div class="bx" style="left:734px;top:146.5px;width:20.2px;height:11px;border-radius:5.5px;background:#f4f5f6"></div><div class="bx" style="left:743.9px;top:147.5px;width:9.3px;height:9px;border-radius:50%;background:#9aa4ad"></div>
<div class="tx" style="left:760.30px;top:147.67px;font-size:8.8px;line-height:8.8px;font-weight:700;color:#f9fafb;transform:scaleX(0.893);transform-origin:0 0;">Molle spingidisco</div>
<div class="bx" style="left:734px;top:164.85px;width:20.2px;height:11px;border-radius:5.5px;background:#f4f5f6"></div><div class="bx" style="left:743.9px;top:165.85px;width:9.3px;height:9px;border-radius:50%;background:#9aa4ad"></div>
<div class="tx" style="left:760.30px;top:166.02px;font-size:8.8px;line-height:8.8px;font-weight:700;color:#f9fafb;transform:scaleX(0.893);transform-origin:0 0;">Alloggiamento Spingidisco</div>
<div class="bx" style="left:734px;top:183.2px;width:20.2px;height:11px;border-radius:5.5px;background:#f4f5f6"></div><div class="bx" style="left:743.9px;top:184.2px;width:9.3px;height:9px;border-radius:50%;background:#9aa4ad"></div>
<div class="tx" style="left:760.30px;top:184.37px;font-size:8.8px;line-height:8.8px;font-weight:700;color:#f9fafb;transform:scaleX(0.893);transform-origin:0 0;">Cuscinetto reggispinta</div>
<div class="bx" style="left:734px;top:201.55px;width:20.2px;height:11px;border-radius:5.5px;background:#f4f5f6"></div><div class="bx" style="left:743.9px;top:202.55px;width:9.3px;height:9px;border-radius:50%;background:#9aa4ad"></div>
<div class="tx" style="left:760.30px;top:202.72px;font-size:8.8px;line-height:8.8px;font-weight:700;color:#f9fafb;transform:scaleX(0.893);transform-origin:0 0;">Pedale frizione</div>
<div class="bx" style="left:734px;top:219.9px;width:20.2px;height:11px;border-radius:5.5px;background:#f4f5f6"></div><div class="bx" style="left:743.9px;top:220.9px;width:9.3px;height:9px;border-radius:50%;background:#9aa4ad"></div>
<div class="tx" style="left:760.30px;top:221.07px;font-size:8.8px;line-height:8.8px;font-weight:700;color:#f9fafb;transform:scaleX(0.893);transform-origin:0 0;">Albero primario</div>
<div class="bx" style="left:734px;top:238.3px;width:29px;height:29px;background:#8f9aa2;border-radius:4px"></div>
<svg width="900" height="572"><path d="M742.9 250.3h9.4l-0.9 8.2c-0.2 1.9-1.4 3-3.2 3h-1.2c-1.8 0-3-1.1-3.2-3z" fill="none" stroke="#fff" stroke-width="1.3" stroke-linejoin="round"/><path d="M749.3 249.8L753.8 244.2" stroke="#fff" stroke-width="1.3" stroke-linecap="round"/><path d="M745 254h5.4M745.5 256.4h4.4M746.2 258.8h3" stroke="#b9c0c6" stroke-width="0.9"/></svg>
<div class="tx" style="left:771.00px;top:249.17px;font-size:8.8px;line-height:8.8px;font-weight:700;color:#f9fafb;transform:scaleX(0.893);transform-origin:0 0;">Premi pedale frizione</div>
<div class="bx" style="left:15.8px;top:438.3px;width:31.2px;height:31.3px;background:#96a2ac;border-radius:5px"></div>
<div class="bx" style="left:57.9px;top:438.3px;width:31.2px;height:31.3px;background:#96a2ac;border-radius:5px"></div>
<div class="bx" style="left:99.8px;top:438.3px;width:31.2px;height:31.3px;background:#96a2ac;border-radius:5px"></div>
<svg width="900" height="572"><path d="M23.3 452L31.2 448L39.3 452L31.2 458z" fill="#1fd41f"/><path d="M23.3 449.6L31.2 445.6L39.3 449.6L31.2 454.6z" fill="#22c8f0"/><path d="M23.3 446.6L31.1 442L39.3 446.6L31.2 450.9z" fill="#e010c8"/><circle cx="73.1" cy="450.1" r="7" fill="none" stroke="#fff" stroke-width="1.5"/><path d="M73.1 443.1v14M73.6 445.4h2.5M73.6 447.4h4.3M73.6 449.4h4.8M73.6 451.4h4.8M73.6 453.4h4.3M73.6 455.4h2.5" stroke="#fff" stroke-width="0.8" opacity="0.85"/><path d="M111.8 442v16M119.3 442v16M106.9 446.4h16.4M106.9 453.1h16.4" stroke="#fff" stroke-width="1.4"/></svg>
<div class="tx" style="left:21.80px;top:462.02px;font-size:6.6px;line-height:6.6px;font-weight:400;color:#eef1f3;transform:scaleX(0.9);transform-origin:0 0;-webkit-text-stroke:0.12px #eef1f3">Colore</div>
<div class="tx" style="left:63.80px;top:462.02px;font-size:6.6px;line-height:6.6px;font-weight:400;color:#eef1f3;transform:scaleX(0.9);transform-origin:0 0;-webkit-text-stroke:0.12px #eef1f3">Ombre</div>
<div class="tx" style="left:106.40px;top:462.02px;font-size:6.6px;line-height:6.6px;font-weight:400;color:#eef1f3;transform:scaleX(0.9);transform-origin:0 0;-webkit-text-stroke:0.12px #eef1f3">Griglia</div>
<svg width="900" height="572"><rect x="50.6" y="487" width="1.9" height="12.8" fill="#fff"/><path d="M53.8 493.4L65.4 487V499.8z" fill="#fff"/><path d="M90 486.5L102 493.3L90 500z" fill="#fff"/><rect x="147" y="498.9" width="63" height="5.8" rx="2.9" fill="#a6b0b8"/><circle cx="148" cy="501.8" r="2.6" fill="#a6b0b8" stroke="#f2f4f5" stroke-width="1.2"/><path d="M257 496.9h12.3" stroke="#fff" stroke-width="1.7"/><path d="M293.7 496.8h12.3M299.85 490.6v12.4" stroke="#fff" stroke-width="1.7"/><circle cx="531.7" cy="491.8" r="6" fill="none" stroke="#fff" stroke-width="1.6"/><path d="M536.2 496.3L540.2 500.6M528.7 491.8h6" stroke="#fff" stroke-width="1.6"/><circle cx="562.8" cy="491.8" r="6" fill="none" stroke="#fff" stroke-width="1.6"/><path d="M567.3 496.3L571.3 500.6M559.8 491.8h6M562.8 488.8v6" stroke="#fff" stroke-width="1.6"/><path d="M594.8 490.6A6 6 0 1 0 597.6 487.6" fill="none" stroke="#fff" stroke-width="1.3"/><path d="M594.3 486.6L594.8 490.8L598.6 490" fill="none" stroke="#fff" stroke-width="1.2"/><path d="M604.6 497.1L608 500.6" stroke="#fff" stroke-width="1.3"/><circle cx="637.3" cy="493.4" r="7.2" fill="none" stroke="#fff" stroke-width="1.6"/><path d="M634.8 491.3c0-1.6 1.1-2.6 2.5-2.6s2.5 1 2.5 2.4c0 1.9-2.5 2-2.5 3.8" fill="none" stroke="#fff" stroke-width="1.4"/><circle cx="637.3" cy="497.2" r="0.8" fill="#fff"/><rect x="679.6" y="487.1" width="12.5" height="12.5" rx="1.8" fill="#fff"/><rect x="681.8" y="488.9" width="6.2" height="8.9" fill="#97a2ab"/><path d="M683.9 491.6L685.6 493.3L683.9 495" fill="none" stroke="#fff" stroke-width="0.9"/></svg>
<div class="tx" style="left:47.70px;top:508.42px;font-size:6.6px;line-height:6.6px;font-weight:400;color:#f2f4f5;transform:scaleX(0.8);transform-origin:0 0;-webkit-text-stroke:0.15px #f2f4f5">Ripristina</div>
<div class="tx" style="left:90.00px;top:508.42px;font-size:6.6px;line-height:6.6px;font-weight:400;color:#f2f4f5;transform:scaleX(0.8);transform-origin:0 0;-webkit-text-stroke:0.15px #f2f4f5">Play</div>
<div class="tx" style="left:164.40px;top:488.39px;font-size:8.6px;line-height:8.6px;font-weight:700;color:#f6f8f9;transform:scaleX(0.9);transform-origin:0 0;-webkit-text-stroke:0.2px #f6f8f9">Velocità</div>
<div class="tx" style="left:124.00px;top:497.61px;font-size:8.4px;line-height:8.4px;font-weight:700;color:#f6f8f9;transform:scaleX(0.89);transform-origin:0 0;-webkit-text-stroke:0.2px #f6f8f9">MIN</div>
<div class="tx" style="left:217.00px;top:497.41px;font-size:8.4px;line-height:8.4px;font-weight:700;color:#f6f8f9;transform:scaleX(0.89);transform-origin:0 0;-webkit-text-stroke:0.2px #f6f8f9">MAX</div>
<div class="tx" style="left:518.90px;top:508.62px;font-size:6.6px;line-height:6.6px;font-weight:400;color:#f2f4f5;transform:scaleX(0.805);transform-origin:0 0;-webkit-text-stroke:0.15px #f2f4f5">Zoom meno</div>
<div class="tx" style="left:553.00px;top:508.62px;font-size:6.6px;line-height:6.6px;font-weight:400;color:#f2f4f5;transform:scaleX(0.805);transform-origin:0 0;-webkit-text-stroke:0.15px #f2f4f5">Zoom più</div>
<div class="tx" style="left:587.80px;top:508.62px;font-size:6.6px;line-height:6.6px;font-weight:400;color:#f2f4f5;transform:scaleX(0.805);transform-origin:0 0;-webkit-text-stroke:0.15px #f2f4f5">Zoom reset</div>
<div class="tx" style="left:631.60px;top:508.82px;font-size:6.6px;line-height:6.6px;font-weight:400;color:#f2f4f5;transform:scaleX(0.805);transform-origin:0 0;-webkit-text-stroke:0.15px #f2f4f5">Aiuto</div>
<div class="tx" style="left:679.00px;top:508.82px;font-size:6.6px;line-height:6.6px;font-weight:400;color:#f2f4f5;transform:scaleX(0.805);transform-origin:0 0;-webkit-text-stroke:0.15px #f2f4f5">Riduci</div>
<svg width="900" height="572"><g fill="none" stroke="#fbfcfe" stroke-width="1.15" stroke-linecap="round" stroke-linejoin="round"><circle cx="12.7" cy="542.6" r="1.5"/><circle cx="12.7" cy="547.8" r="1.5"/><circle cx="12.7" cy="553.1" r="1.5"/><path d="M17 542.6h11.4M17 547.8h11.4M17 553.1h11.4" stroke-width="1.3"/><path d="M46.3 536.8v3.5M46.3 544.2v6.6M51 536.8v8.3M51 549.1v1.7M56 536.8v0.6M56 541.5v9.3"/><circle cx="46.3" cy="542.2" r="1.9"/><circle cx="51" cy="547.1" r="1.9"/><circle cx="56" cy="539.4" r="1.9"/><rect x="75.3" y="537.2" width="5.9" height="5.4" rx="1.3"/><rect x="83.3" y="537.2" width="5.9" height="5.4" rx="1.3"/><rect x="75.3" y="544.6" width="5.9" height="5.6" rx="1.3"/><path d="M85 540h2.4" stroke-width="0.8"/><circle cx="78.2" cy="539.9" r="0.4" fill="#fbfcfe"/><circle cx="78.2" cy="547.4" r="0.4" fill="#fbfcfe"/></g><circle cx="86.2" cy="546" r="1.3" fill="#fbfcfe"/><path d="M83.2 550.6c0-1.6 1.3-2.6 3-2.6s3 1 3 2.6z" fill="#fbfcfe"/></svg>
<svg width="900" height="572"><path d="M110.6 536.4v1.6M107.3 538.6h6.8M108.6 539.2c0.8 2.6 2.4 4.8 4.8 6.2M112.6 539.2c-0.8 2.6-2.4 4.8-5.2 6.2" fill="none" stroke="#fbfcfe" stroke-width="1.1" stroke-linecap="round"/></svg>
<div class="tx" style="left:113.20px;top:541.97px;font-size:10.5px;line-height:10.5px;font-weight:400;color:#fbfcfe;transform:scaleX(1.0);transform-origin:0 0;-webkit-text-stroke:0.3px #fbfcfe">A</div>
<svg width="900" height="572"><g fill="none" stroke="#fbfcfe" stroke-width="1.15" stroke-linecap="round" stroke-linejoin="round"><rect x="464.6" y="536.8" width="13.8" height="13.7" rx="2.2"/><path d="M470 536.8v13.7M464.6 541.9h13.8"/><circle cx="501.5" cy="542.2" r="5.4"/><path d="M505.3 546L509.7 550.4M501.5 539.6v5.2M498.9 542.2h5.2"/><path d="M527.6 538.6c2.4-0.6 5-0.4 7.2 0.8c2.2-1.2 4.8-1.4 7.2-0.8v10.6c-2.4-0.6-5-0.4-7.2 0.8c-2.2-1.2-4.8-1.4-7.2-0.8z M534.8 539.4v10.6"/><rect x="561" y="537" width="10.4" height="5.6" rx="1.4"/><rect x="561" y="544.6" width="10.4" height="6" rx="1.4"/><path d="M563 541.4c1.2-2 2.6-2 3.6-0.6c0.8 1 1.6 1 2.6 0M563 549c1.2-2 2.6-2 3.6-0.6c0.8 1 1.6 1 2.6 0" stroke-width="0.9"/><rect x="590.8" y="537.5" width="7.8" height="7.4" rx="1.4"/><rect x="596.2" y="542.5" width="7.8" height="7.8" rx="1.4"/><path d="M592.9 539.4L594.7 543L596.5 539.4M598.7 544.4v4M598.7 544.4h2.2M598.7 546.3h1.7" stroke-width="0.8"/><rect x="622" y="536.9" width="13.5" height="13.7" rx="2.4"/><path d="M626.3 540v7.4h5.2" stroke-width="1.3"/><rect x="651.8" y="536.8" width="11.6" height="14" rx="2.4"/><path d="M663.4 541.2l5.4-2.3v9.6l-5.4-2.3"/><path d="M698.6 545.2v-5.8c0-1.4-1-2.5-2.4-2.5h-9.1c-1.4 0-2.5 1.1-2.5 2.5v9.1c0 1.4 1.1 2.4 2.5 2.4h5.8z M698.6 545.2l-5.7 5.7c0-3.6 2-5.7 5.7-5.7z"/><circle cx="724.6" cy="542.2" r="5.3"/><path d="M720.8 546L716.5 550.4"/><path d="M748 542.6c1.3-1.3 3.5-1.5 4.3-0.3c0.9 1.4-0.6 2.8-2.6 3.9c-2.2 1.2-2.6 3.6-0.4 4.4h6.6"/><g transform="rotate(24 758.5 543.5)"><rect x="756.4" y="536.3" width="4.2" height="14.2" rx="2.1"/></g><circle cx="761.2" cy="538.6" r="0.5" fill="#fbfcfe"/><path d="M790 540.6L782.5 547.7L790 554.8M811.2 545.3L817.5 540.6L823.9 545.3M811.2 551.6L817.5 556.2L823.9 551.6M844.6 540.6L852.3 547.7L844.6 554.8" stroke-width="1.2"/><path d="M875.6 542.7L871.3 547.7L875.6 552.6M871.5 547.7h13.4c2.6 0 4.6-1.7 4.6-3.9s-2-3.9-4.6-3.9h-1.2" stroke-width="1.2"/></g><circle cx="609.6" cy="533.1" r="3.5" fill="#f26a12"/></svg>
<div class="tx" style="left:38.20px;top:556.80px;font-size:6.8px;line-height:6.8px;color:#dbe5f1;transform:scaleX(0.87);transform-origin:0 0;-webkit-text-stroke:0.15px #dbe5f1">Configura</div>
<div class="tx" style="left:71.00px;top:556.80px;font-size:6.8px;line-height:6.8px;color:#dbe5f1;transform:scaleX(0.87);transform-origin:0 0;-webkit-text-stroke:0.15px #dbe5f1">QR Code</div>
<div class="tx" style="left:105.20px;top:556.80px;font-size:6.8px;line-height:6.8px;color:#dbe5f1;transform:scaleX(0.87);transform-origin:0 0;-webkit-text-stroke:0.15px #dbe5f1">Lingua</div>
<div class="tx" style="left:459.50px;top:556.80px;font-size:6.8px;line-height:6.8px;color:#dbe5f1;transform:scaleX(0.87);transform-origin:0 0;-webkit-text-stroke:0.15px #dbe5f1"><u>T</u>abellone</div>
<div class="tx" style="left:495.40px;top:556.80px;font-size:6.8px;line-height:6.8px;color:#dbe5f1;transform:scaleX(0.87);transform-origin:0 0;-webkit-text-stroke:0.15px #dbe5f1"><u>Z</u>oom</div>
<div class="tx" style="left:523.00px;top:556.80px;font-size:6.8px;line-height:6.8px;color:#dbe5f1;transform:scaleX(0.87);transform-origin:0 0;-webkit-text-stroke:0.15px #dbe5f1"><u>M</u>anuale</div>
<div class="tx" style="left:552.80px;top:556.80px;font-size:6.8px;line-height:6.8px;color:#dbe5f1;transform:scaleX(0.87);transform-origin:0 0;-webkit-text-stroke:0.15px #dbe5f1"><u>I</u>ntegrativi</div>
<div class="tx" style="left:591.00px;top:556.80px;font-size:6.8px;line-height:6.8px;color:#dbe5f1;transform:scaleX(0.87);transform-origin:0 0;-webkit-text-stroke:0.15px #dbe5f1"><u>Q</u>uiz</div>
<div class="tx" style="left:620.00px;top:556.80px;font-size:6.8px;line-height:6.8px;color:#dbe5f1;transform:scaleX(0.87);transform-origin:0 0;-webkit-text-stroke:0.15px #dbe5f1"><u>L</u>istato</div>
<div class="tx" style="left:649.00px;top:556.80px;font-size:6.8px;line-height:6.8px;color:#dbe5f1;transform:scaleX(0.87);transform-origin:0 0;-webkit-text-stroke:0.15px #dbe5f1"><u>W</u>ebcam</div>
<div class="tx" style="left:685.00px;top:556.80px;font-size:6.8px;line-height:6.8px;color:#dbe5f1;transform:scaleX(0.87);transform-origin:0 0;-webkit-text-stroke:0.15px #dbe5f1"><u>N</u>ote</div>
<div class="tx" style="left:714.00px;top:556.80px;font-size:6.8px;line-height:6.8px;color:#dbe5f1;transform:scaleX(0.87);transform-origin:0 0;-webkit-text-stroke:0.15px #dbe5f1"><u>R</u>icerca</div>
<div class="tx" style="left:744.00px;top:556.80px;font-size:6.8px;line-height:6.8px;color:#dbe5f1;transform:scaleX(0.87);transform-origin:0 0;-webkit-text-stroke:0.15px #dbe5f1"><u>D</u>isegno</div></div></body></html>
